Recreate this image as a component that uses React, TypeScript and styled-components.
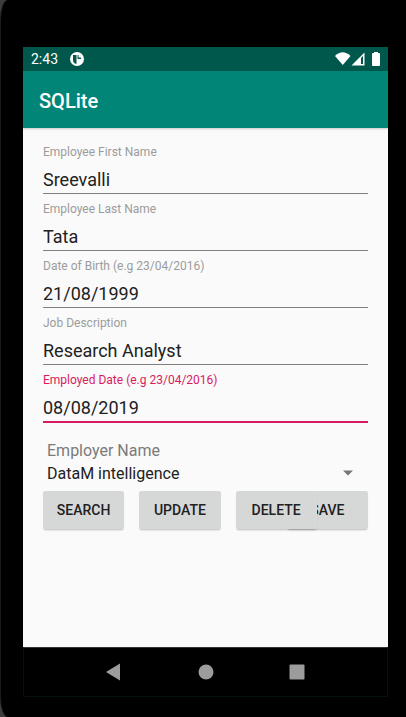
import React, { useState } from "react";
import styled, { createGlobalStyle } from "styled-components";

const GlobalStyle = createGlobalStyle`
  * { box-sizing: border-box; }
  body { margin: 0; background: #3c3c3c; font-family: Roboto, sans-serif; }
  input, select, button { font-family: inherit; margin: 0; }
`;

const Device = styled.div`
  display: flex;
  min-height: 100vh;
  padding: 47px 18px 20px 22px;
  background: #000;
  border-left: 1px solid #1c1c1c;
  border-radius: 8px 0 0 8px / 20px 0 0 20px;
`;

const Screen = styled.div`
  flex: 1;
  min-width: 0;
  display: flex;
  flex-direction: column;
  background: #fafafa;
`;

const StatusBar = styled.header`
  display: flex;
  align-items: center;
  height: 24px;
  padding: 0 7px 0 8px;
  background: #00574b;
  color: #fff;
  font-size: 14px;
`;

const StatusIcons = styled.div`
  display: flex;
  align-items: center;
  margin-left: auto;
`;

const NotificationIcon = styled.svg`
  margin-left: 12px;
`;

const AppBar = styled.div`
  display: flex;
  align-items: center;
  height: 57px;
  padding: 2px 16px 0;
  background: #008577;
  box-shadow: 0 1px 2px rgba(0, 0, 0, 0.2);
`;

const Title = styled.h1`
  margin: 0;
  color: #fff;
  font-size: 20px;
  font-weight: 500;
  line-height: 24px;
`;

const Form = styled.form`
  flex: 1;
  padding: 9px 20px 0;
`;

const Field = styled.div`
  display: flex;
  flex-direction: column;
  height: 57px;
  padding-top: 8px;
`;

const FieldLabel = styled.label<{ $active?: boolean }>`
  color: ${(p) => (p.$active ? "#d81b60" : "#9c9c9c")};
  font-size: 12px;
  line-height: 14px;
`;

const FieldInput = styled.input<{ $active?: boolean }>`
  width: 100%;
  height: ${(p) => (p.$active ? "36px" : "35px")};
  flex-shrink: 0;
  padding: 6px 0 0;
  border: 0;
  border-bottom: ${(p) => (p.$active ? "2px solid #d81b60" : "1px solid #808080")};
  border-radius: 0;
  outline: none;
  background: transparent;
  color: #212121;
  font-size: 18px;
`;

const SpinnerGroup = styled.div`
  display: flex;
  flex-direction: column;
  padding: 18px 14px 0 4px;
`;

const SpinnerLabel = styled.label`
  color: #7b7b7b;
  font-size: 16px;
  line-height: 22px;
`;

const SpinnerRow = styled.div`
  display: flex;
  align-items: center;
`;

const Spinner = styled.select`
  flex: 1;
  min-width: 0;
  height: 22px;
  padding: 0;
  border: 0;
  outline: none;
  appearance: none;
  background: transparent;
  color: #212121;
  font-size: 16px;
`;

const Actions = styled.div`
  display: flex;
  gap: 15px;
  padding-top: 7px;
`;

const ActionButton = styled.button<{ $raised?: boolean; $tucked?: boolean }>`
  position: relative;
  z-index: ${(p) => (p.$raised ? 1 : 0)};
  flex: 1 0 0;
  height: 38px;
  margin-left: ${(p) => (p.$tucked ? "-45px" : "0")};
  padding: 0;
  border: 0;
  border-radius: 2px;
  background: #d6d8d7;
  box-shadow: 0 2px 2px -1px rgba(0, 0, 0, 0.25);
  color: #212121;
  font-size: 14px;
  font-weight: 500;
`;

const NavBar = styled.nav`
  display: flex;
  align-items: center;
  justify-content: center;
  gap: 67px;
  height: 50px;
  background: #000;
  border: 1px solid #06100e;
  border-top-color: #333;
`;

const NavButton = styled.button`
  display: flex;
  align-items: center;
  justify-content: center;
  width: 24px;
  height: 24px;
  padding: 0;
  border: 0;
  background: transparent;
`;

const fields = [
  { id: "first", label: "Employee First Name", value: "Sreevalli" },
  { id: "last", label: "Employee Last Name", value: "Tata" },
  { id: "birth", label: "Date of Birth (e.g 23/04/2016)", value: "21/08/1999" },
  { id: "job", label: "Job Description", value: "Research Analyst" },
  { id: "employed", label: "Employed Date (e.g 23/04/2016)", value: "08/08/2019" },
];

export default function App() {
  const [active, setActive] = useState("employed");
  return (
    <>
      <GlobalStyle />
      <Device>
        <Screen>
          <StatusBar>
            <span>2:43</span>
            <NotificationIcon width="14" height="14" viewBox="0 0 14 14" aria-hidden="true">
              <circle cx="7" cy="7" r="7" fill="#fff" />
              <path d="M3 3h3.5v9Q3 11 3 8zM7.5 3H11v4H7.5z" fill="#00574b" />
              <path d="M8.5 3H11v2.5H8.5z" fill="#fff" />
            </NotificationIcon>
            <StatusIcons>
              <svg width="46" height="14" viewBox="0 0 46 14" aria-hidden="true">
                <path d="M0 4Q7.5-3.4 15.5 4L7.75 13z" fill="#fff" />
                <path d="M16.5 13.5L29.5.5v13z" fill="#fff" />
                <path d="M26 6l2-2v8h-2z" fill="#00574b" />
                <path d="M37 2q0-1 1-1h1V0h4v1h1q1 0 1 1v11q0 1-1 1h-6q-1 0-1-1z" fill="#fff" />
              </svg>
            </StatusIcons>
          </StatusBar>
          <AppBar>
            <Title>SQLite</Title>
          </AppBar>
          <Form onSubmit={(e) => e.preventDefault()}>
            {fields.map((f) => (
              <Field key={f.id}>
                <FieldLabel htmlFor={f.id} $active={active === f.id}>{f.label}</FieldLabel>
                <FieldInput
                  id={f.id}
                  type="text"
                  defaultValue={f.value}
                  $active={active === f.id}
                  onFocus={() => setActive(f.id)}
                />
              </Field>
            ))}
            <SpinnerGroup>
              <SpinnerLabel htmlFor="employer">Employer Name</SpinnerLabel>
              <SpinnerRow>
                <Spinner id="employer" defaultValue="DataM intelligence">
                  <option>DataM intelligence</option>
                </Spinner>
                <svg width="12" height="6" viewBox="0 0 12 6" aria-hidden="true">
                  <path d="M1 .5h10L6 5.5z" fill="#757575" />
                </svg>
              </SpinnerRow>
            </SpinnerGroup>
            <Actions>
              <ActionButton type="button">SEARCH</ActionButton>
              <ActionButton type="button">UPDATE</ActionButton>
              <ActionButton type="button" $raised>DELETE</ActionButton>
              <ActionButton type="submit" $tucked>SAVE</ActionButton>
            </Actions>
          </Form>
          <NavBar>
            <NavButton type="button" aria-label="Back">
              <svg width="20" height="18" viewBox="0 0 20 18"><path d="M1 9L15 .5v17z" fill="#9c9c9c" /></svg>
            </NavButton>
            <NavButton type="button" aria-label="Home">
              <svg width="16" height="16" viewBox="0 0 16 16"><circle cx="8" cy="8" r="7.5" fill="#9c9c9c" /></svg>
            </NavButton>
            <NavButton type="button" aria-label="Recent apps">
              <svg width="16" height="16" viewBox="0 0 16 16"><rect x=".5" y=".5" width="15" height="15" rx="1" fill="#9c9c9c" /></svg>
            </NavButton>
          </NavBar>
        </Screen>
      </Device>
    </>
  );
}
